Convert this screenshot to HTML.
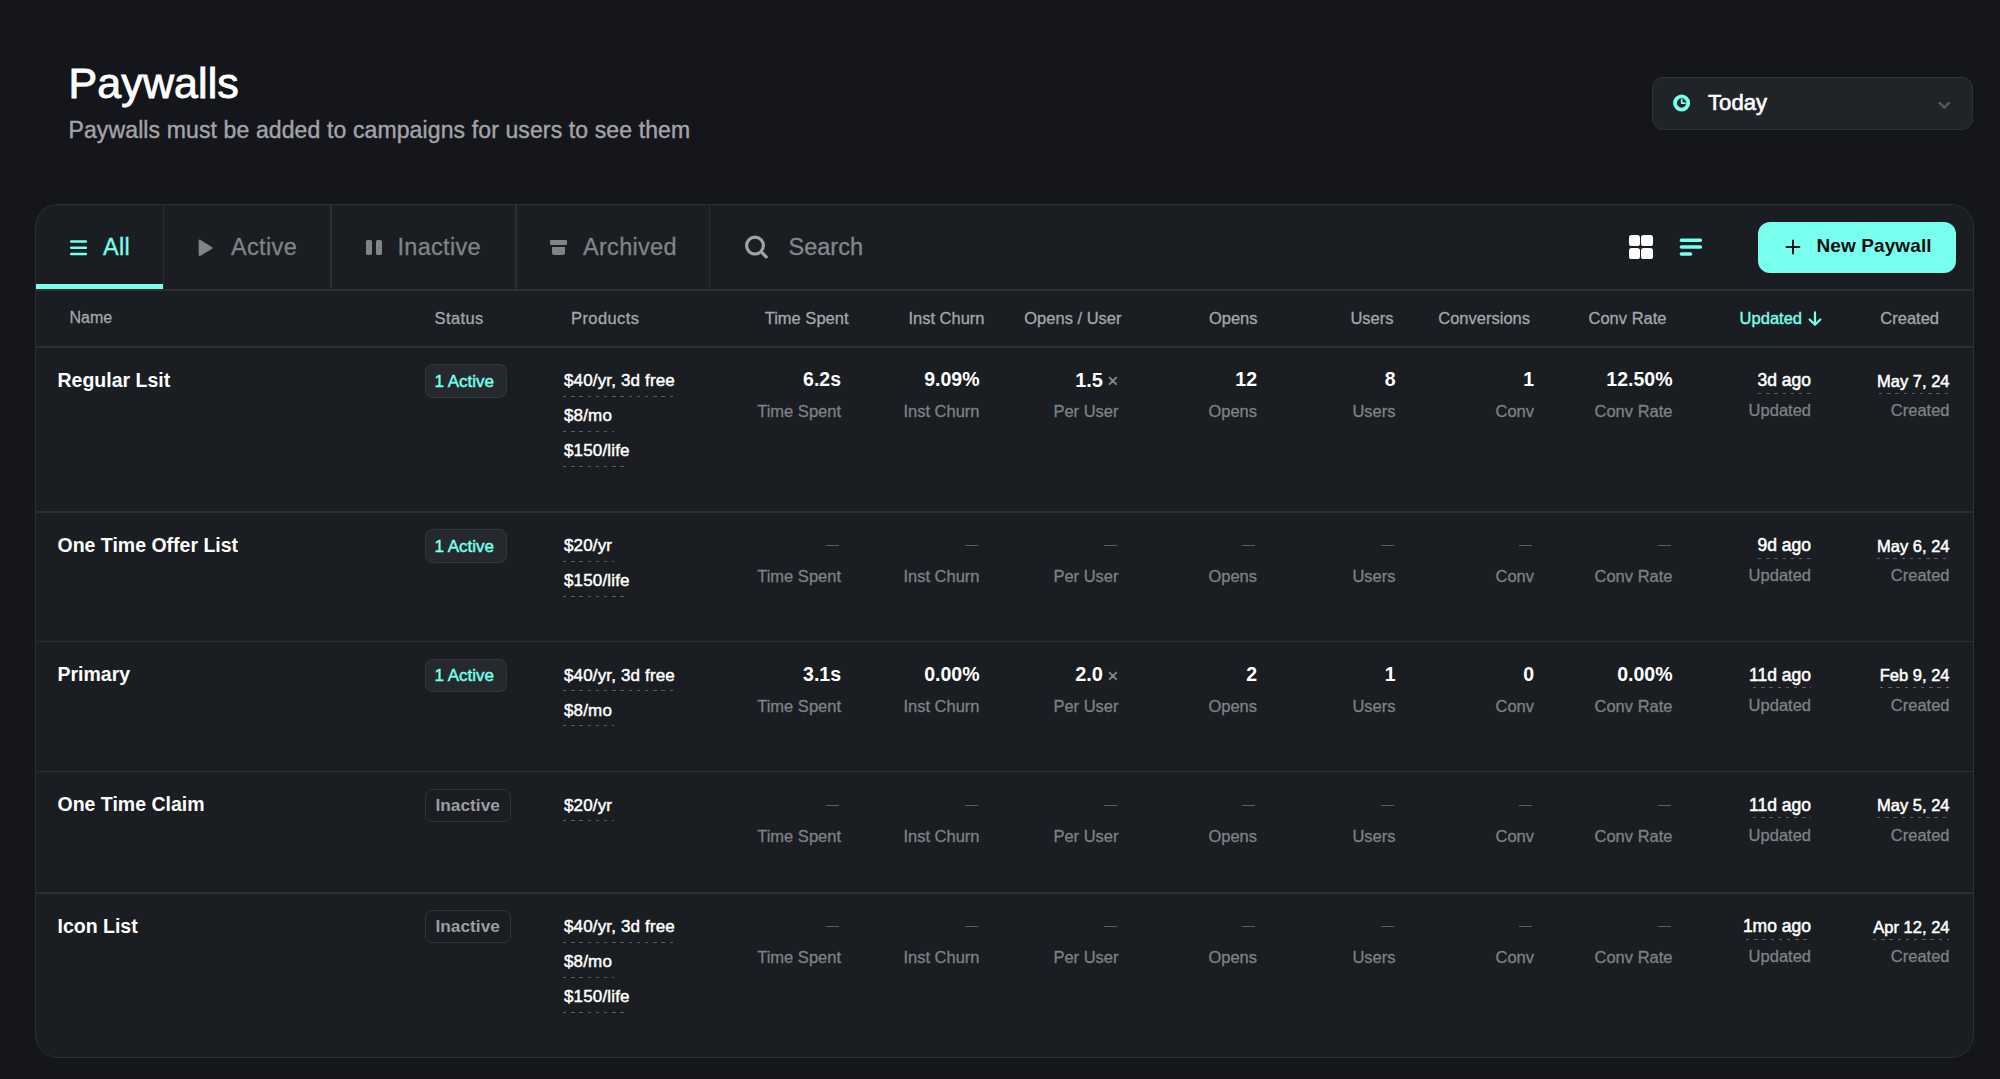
<!DOCTYPE html>
<html><head><meta charset="utf-8"><title>Paywalls</title>
<style>
html,body{margin:0;padding:0}
body{width:2000px;height:1079px;background:#15161b;position:relative;overflow:hidden;font-family:"Liberation Sans", sans-serif}
.t{position:absolute;white-space:nowrap;line-height:1}
</style></head><body>
<div class="t" style="left:68.50px;top:61.75px;font-size:43px;color:#ffffff;font-weight:400;letter-spacing:0.1px;-webkit-text-stroke:0.9px #ffffff;">Paywalls</div>
<div class="t" style="left:68.50px;top:118.75px;font-size:23px;color:#a3a4a8;font-weight:400;letter-spacing:0.12px;-webkit-text-stroke:0.4px #a3a4a8;">Paywalls must be added to campaigns for users to see them</div>
<div style="position:absolute;left:1652px;top:77px;width:321px;height:52.5px;box-sizing:border-box;border:1.5px solid #2e3135;background:#202328;border-radius:11px"></div>
<svg style="position:absolute;left:1671px;top:92px" width="22" height="22" viewBox="0 0 22 22"><circle cx="10.6" cy="11" r="6.6" fill="none" stroke="#78ffee" stroke-width="3.9"/><path d="M10.7 7.7V11.2H14" fill="none" stroke="#78ffee" stroke-width="1.8" stroke-linecap="round" stroke-linejoin="round"/></svg>
<div class="t" style="left:1708.00px;top:91.90px;font-size:22px;color:#ffffff;font-weight:400;letter-spacing:0.1px;-webkit-text-stroke:0.65px #ffffff;">Today</div>
<svg style="position:absolute;left:1934px;top:97px" width="20" height="14" viewBox="0 0 20 14"><path d="M5 5.4L10.3 10.5L15.6 5.4" fill="none" stroke="#54575b" stroke-width="2.5" stroke-linecap="butt" stroke-linejoin="miter"/></svg>
<div style="position:absolute;left:35px;top:204px;width:1938.5px;height:854px;box-sizing:border-box;border:1.5px solid #2b2e32;background:#1a1d21;border-radius:23px"></div>
<div style="position:absolute;left:36px;top:289px;width:1936.5px;height:1.5px;background:#2b2e32"></div>
<div style="position:absolute;left:162.5px;top:205px;width:1.5px;height:84px;background:#2b2e32"></div>
<div style="position:absolute;left:330px;top:205px;width:1.5px;height:84px;background:#2b2e32"></div>
<div style="position:absolute;left:515px;top:205px;width:1.5px;height:84px;background:#2b2e32"></div>
<div style="position:absolute;left:708.5px;top:205px;width:1.5px;height:84px;background:#2b2e32"></div>
<div style="position:absolute;left:36px;top:284px;width:127px;height:4.5px;background:#78ffee"></div>
<svg style="position:absolute;left:68px;top:238px" width="22" height="20" viewBox="0 0 22 20"><path d="M3.2 3.5H17.9M3.2 9.7H17.9M3.2 16H17.9" stroke="#78ffee" stroke-width="2.5" stroke-linecap="round"/></svg>
<div class="t" style="left:103.00px;top:235.83px;font-size:23.5px;color:#78ffee;font-weight:400;letter-spacing:0.3px;-webkit-text-stroke:0.3px #78ffee;">All</div>
<svg style="position:absolute;left:197px;top:237px" width="18" height="22" viewBox="0 0 18 22"><path d="M3.2 3.4Q2.2 2.8 2.2 4V17.6Q2.2 18.8 3.2 18.2L14.6 11.6Q15.6 11 14.6 10.4Z" fill="#818386" stroke="#818386" stroke-width="1.2" stroke-linejoin="round"/></svg>
<div class="t" style="left:231.00px;top:235.83px;font-size:23.5px;color:#818386;font-weight:400;letter-spacing:0.35px;-webkit-text-stroke:0.3px #818386;">Active</div>
<div style="position:absolute;left:365.5px;top:240px;width:6px;height:15.2px;background:#818386;border-radius:1.6px"></div>
<div style="position:absolute;left:375.5px;top:240px;width:6px;height:15.2px;background:#818386;border-radius:1.6px"></div>
<div class="t" style="left:397.50px;top:235.83px;font-size:23.5px;color:#818386;font-weight:400;letter-spacing:0.3px;-webkit-text-stroke:0.3px #818386;">Inactive</div>
<div style="position:absolute;left:549.5px;top:240px;width:17.5px;height:5px;background:#818386;border-radius:1px"></div>
<div style="position:absolute;left:551.5px;top:246.5px;width:13.5px;height:8.8px;background:#818386;border-radius:0 0 2.5px 2.5px"></div>
<div class="t" style="left:583.00px;top:235.83px;font-size:23.5px;color:#818386;font-weight:400;letter-spacing:0.3px;-webkit-text-stroke:0.3px #818386;">Archived</div>
<svg style="position:absolute;left:740px;top:231px" width="32" height="32" viewBox="0 0 32 32"><circle cx="15" cy="14.6" r="8.4" fill="none" stroke="#a0a2a6" stroke-width="3.2"/><path d="M21.5 21.2L26.2 25.9" stroke="#a0a2a6" stroke-width="3.2" stroke-linecap="round"/></svg>
<div class="t" style="left:788.50px;top:235.83px;font-size:23.5px;color:#85878b;font-weight:400;-webkit-text-stroke:0.3px #85878b;">Search</div>
<div style="position:absolute;left:1628.8px;top:235px;width:11.2px;height:11.2px;background:#ffffff;border-radius:2.6px"></div>
<div style="position:absolute;left:1641.4px;top:235px;width:11.2px;height:11.2px;background:#ffffff;border-radius:2.6px"></div>
<div style="position:absolute;left:1628.8px;top:247.6px;width:11.2px;height:11.2px;background:#ffffff;border-radius:2.6px"></div>
<div style="position:absolute;left:1641.4px;top:247.6px;width:11.2px;height:11.2px;background:#ffffff;border-radius:2.6px"></div>
<svg style="position:absolute;left:1676px;top:234px" width="30" height="26" viewBox="0 0 30 26"><path d="M5.4 6.2H24.4M5.4 13H24.4M5.4 20H14.5" stroke="#78ffee" stroke-width="3.6" stroke-linecap="round"/></svg>
<div style="position:absolute;left:1757.5px;top:221.5px;width:198.5px;height:51px;background:#78ffee;border-radius:12px"></div>
<svg style="position:absolute;left:1783px;top:237px" width="20" height="20" viewBox="0 0 20 20"><path d="M10 2.8V17.2M2.8 10H17.2" stroke="#111315" stroke-width="1.9" stroke-linecap="butt"/></svg>
<div class="t" style="left:1816.50px;top:236.15px;font-size:19px;color:#0f1114;font-weight:700;letter-spacing:0.1px;">New Paywall</div>
<div style="position:absolute;left:36px;top:346px;width:1936.5px;height:1.5px;background:#2b2e32"></div>
<div class="t" style="left:69.50px;top:310.20px;font-size:16px;color:#a5a7ab;font-weight:400;-webkit-text-stroke:0.3px #a5a7ab;">Name</div>
<div class="t" style="left:434.50px;top:309.78px;font-size:16.5px;color:#a5a7ab;font-weight:400;letter-spacing:0.4px;-webkit-text-stroke:0.3px #a5a7ab;">Status</div>
<div class="t" style="left:571.00px;top:309.78px;font-size:16.5px;color:#a5a7ab;font-weight:400;letter-spacing:0.4px;-webkit-text-stroke:0.3px #a5a7ab;">Products</div>
<div class="t" style="right:1151.50px;top:309.78px;font-size:16.5px;color:#a5a7ab;font-weight:400;-webkit-text-stroke:0.3px #a5a7ab;">Time Spent</div>
<div class="t" style="right:1015.50px;top:309.78px;font-size:16.5px;color:#a5a7ab;font-weight:400;-webkit-text-stroke:0.3px #a5a7ab;">Inst Churn</div>
<div class="t" style="right:878.50px;top:309.78px;font-size:16.5px;color:#a5a7ab;font-weight:400;-webkit-text-stroke:0.3px #a5a7ab;">Opens / User</div>
<div class="t" style="right:742.50px;top:309.78px;font-size:16.5px;color:#a5a7ab;font-weight:400;-webkit-text-stroke:0.3px #a5a7ab;">Opens</div>
<div class="t" style="right:606.50px;top:309.78px;font-size:16.5px;color:#a5a7ab;font-weight:400;-webkit-text-stroke:0.3px #a5a7ab;">Users</div>
<div class="t" style="right:470.00px;top:309.78px;font-size:16.5px;color:#a5a7ab;font-weight:400;-webkit-text-stroke:0.3px #a5a7ab;">Conversions</div>
<div class="t" style="right:333.50px;top:309.78px;font-size:16.5px;color:#a5a7ab;font-weight:400;-webkit-text-stroke:0.3px #a5a7ab;">Conv Rate</div>
<div class="t" style="right:61.00px;top:309.78px;font-size:16.5px;color:#a5a7ab;font-weight:400;-webkit-text-stroke:0.3px #a5a7ab;">Created</div>
<div class="t" style="right:198.00px;top:309.78px;font-size:16.5px;color:#78ffee;font-weight:400;-webkit-text-stroke:0.4px #78ffee;">Updated</div>
<svg style="position:absolute;left:1806px;top:309px" width="18" height="20" viewBox="0 0 18 20"><path d="M9 3.3V15.6M3.6 10.5L9 15.8L14.4 10.5" fill="none" stroke="#78ffee" stroke-width="2.2" stroke-linecap="round" stroke-linejoin="round"/></svg>
<div class="t" style="left:57.50px;top:370.53px;font-size:19.5px;color:#ffffff;font-weight:700;">Regular Lsit</div>
<div style="position:absolute;left:424.5px;top:364.0px;width:82.5px;height:33.5px;box-sizing:border-box;border:1.5px solid #34373b;background:#25282c;border-radius:7.5px"></div>
<div class="t" style="left:434.50px;top:372.55px;font-size:17px;color:#78ffee;font-weight:400;-webkit-text-stroke:0.45px #78ffee;">1 Active</div>
<div class="t" style="left:564.00px;top:372.35px;font-size:17px;color:#ffffff;font-weight:400;letter-spacing:0.15px;-webkit-text-stroke:0.45px #ffffff;">$40/yr, 3d free</div>
<div style="position:absolute;left:563.00px;top:395.80px;width:110.50px;height:1.2px;background:repeating-linear-gradient(90deg,#5a5e63 0 3.4px,transparent 3.4px 8.2px)"></div>
<div class="t" style="left:564.00px;top:407.35px;font-size:17px;color:#ffffff;font-weight:400;letter-spacing:0.15px;-webkit-text-stroke:0.45px #ffffff;">$8/mo</div>
<div style="position:absolute;left:563.00px;top:430.80px;width:50.50px;height:1.2px;background:repeating-linear-gradient(90deg,#5a5e63 0 3.4px,transparent 3.4px 8.2px)"></div>
<div class="t" style="left:564.00px;top:442.35px;font-size:17px;color:#ffffff;font-weight:400;letter-spacing:0.15px;-webkit-text-stroke:0.45px #ffffff;">$150/life</div>
<div style="position:absolute;left:563.00px;top:465.80px;width:65.50px;height:1.2px;background:repeating-linear-gradient(90deg,#5a5e63 0 3.4px,transparent 3.4px 8.2px)"></div>
<div class="t" style="right:1159.00px;top:370.23px;font-size:19.5px;color:#ffffff;font-weight:700;">6.2s</div>
<div class="t" style="right:1159.00px;top:403.48px;font-size:16.5px;color:#7e8185;font-weight:400;-webkit-text-stroke:0.3px #7e8185;">Time Spent</div>
<div class="t" style="right:1020.50px;top:370.23px;font-size:19.5px;color:#ffffff;font-weight:700;">9.09%</div>
<div class="t" style="right:1020.50px;top:403.48px;font-size:16.5px;color:#7e8185;font-weight:400;-webkit-text-stroke:0.3px #7e8185;">Inst Churn</div>
<div class="t" style="right:897.00px;top:369.80px;font-size:20px;color:#ffffff;font-weight:700;">1.5</div>
<svg style="position:absolute;left:1107.0px;top:375.0px" width="12" height="12" viewBox="0 0 12 12"><path d="M2.6 2.6L9.2 9.2M9.2 2.6L2.6 9.2" stroke="#838588" stroke-width="1.9" stroke-linecap="round"/></svg>
<div class="t" style="right:881.50px;top:403.48px;font-size:16.5px;color:#7e8185;font-weight:400;-webkit-text-stroke:0.3px #7e8185;">Per User</div>
<div class="t" style="right:743.00px;top:370.23px;font-size:19.5px;color:#ffffff;font-weight:700;">12</div>
<div class="t" style="right:743.00px;top:403.48px;font-size:16.5px;color:#7e8185;font-weight:400;-webkit-text-stroke:0.3px #7e8185;">Opens</div>
<div class="t" style="right:604.50px;top:370.23px;font-size:19.5px;color:#ffffff;font-weight:700;">8</div>
<div class="t" style="right:604.50px;top:403.48px;font-size:16.5px;color:#7e8185;font-weight:400;-webkit-text-stroke:0.3px #7e8185;">Users</div>
<div class="t" style="right:466.00px;top:370.23px;font-size:19.5px;color:#ffffff;font-weight:700;">1</div>
<div class="t" style="right:466.00px;top:403.48px;font-size:16.5px;color:#7e8185;font-weight:400;-webkit-text-stroke:0.3px #7e8185;">Conv</div>
<div class="t" style="right:327.50px;top:370.23px;font-size:19.5px;color:#ffffff;font-weight:700;">12.50%</div>
<div class="t" style="right:327.50px;top:403.48px;font-size:16.5px;color:#7e8185;font-weight:400;-webkit-text-stroke:0.3px #7e8185;">Conv Rate</div>
<div class="t" style="right:189.00px;top:372.12px;font-size:17.5px;color:#ffffff;font-weight:400;-webkit-text-stroke:0.5px #ffffff;">3d ago</div>
<div style="position:absolute;left:1757.50px;top:392.50px;width:53.50px;height:1.2px;background:repeating-linear-gradient(90deg,#5a5e63 0 3.4px,transparent 3.4px 8.2px)"></div>
<div class="t" style="right:189.00px;top:402.18px;font-size:16.5px;color:#7e8185;font-weight:400;-webkit-text-stroke:0.3px #7e8185;">Updated</div>
<div class="t" style="right:50.50px;top:372.98px;font-size:16.5px;color:#ffffff;font-weight:400;-webkit-text-stroke:0.5px #ffffff;">May 7, 24</div>
<div style="position:absolute;left:1878.80px;top:392.50px;width:70.70px;height:1.2px;background:repeating-linear-gradient(90deg,#5a5e63 0 3.4px,transparent 3.4px 8.2px)"></div>
<div class="t" style="right:50.50px;top:402.18px;font-size:16.5px;color:#7e8185;font-weight:400;-webkit-text-stroke:0.3px #7e8185;">Created</div>
<div style="position:absolute;left:36px;top:511.0px;width:1936.5px;height:1.5px;background:#2b2e32"></div>
<div class="t" style="left:57.50px;top:535.52px;font-size:19.5px;color:#ffffff;font-weight:700;">One Time Offer List</div>
<div style="position:absolute;left:424.5px;top:529.0px;width:82.5px;height:33.5px;box-sizing:border-box;border:1.5px solid #34373b;background:#25282c;border-radius:7.5px"></div>
<div class="t" style="left:434.50px;top:537.55px;font-size:17px;color:#78ffee;font-weight:400;-webkit-text-stroke:0.45px #78ffee;">1 Active</div>
<div class="t" style="left:564.00px;top:537.35px;font-size:17px;color:#ffffff;font-weight:400;letter-spacing:0.15px;-webkit-text-stroke:0.45px #ffffff;">$20/yr</div>
<div style="position:absolute;left:563.00px;top:560.80px;width:51.00px;height:1.2px;background:repeating-linear-gradient(90deg,#5a5e63 0 3.4px,transparent 3.4px 8.2px)"></div>
<div class="t" style="left:564.00px;top:572.35px;font-size:17px;color:#ffffff;font-weight:400;letter-spacing:0.15px;-webkit-text-stroke:0.45px #ffffff;">$150/life</div>
<div style="position:absolute;left:563.00px;top:595.80px;width:65.50px;height:1.2px;background:repeating-linear-gradient(90deg,#5a5e63 0 3.4px,transparent 3.4px 8.2px)"></div>
<div style="position:absolute;left:826px;top:545.3px;width:13px;height:1.1px;background:#5a5d62"></div>
<div class="t" style="right:1159.00px;top:568.48px;font-size:16.5px;color:#7e8185;font-weight:400;-webkit-text-stroke:0.3px #7e8185;">Time Spent</div>
<div style="position:absolute;left:964.5px;top:545.3px;width:13px;height:1.1px;background:#5a5d62"></div>
<div class="t" style="right:1020.50px;top:568.48px;font-size:16.5px;color:#7e8185;font-weight:400;-webkit-text-stroke:0.3px #7e8185;">Inst Churn</div>
<div style="position:absolute;left:1103.5px;top:545.3px;width:13px;height:1.1px;background:#5a5d62"></div>
<div class="t" style="right:881.50px;top:568.48px;font-size:16.5px;color:#7e8185;font-weight:400;-webkit-text-stroke:0.3px #7e8185;">Per User</div>
<div style="position:absolute;left:1242px;top:545.3px;width:13px;height:1.1px;background:#5a5d62"></div>
<div class="t" style="right:743.00px;top:568.48px;font-size:16.5px;color:#7e8185;font-weight:400;-webkit-text-stroke:0.3px #7e8185;">Opens</div>
<div style="position:absolute;left:1380.5px;top:545.3px;width:13px;height:1.1px;background:#5a5d62"></div>
<div class="t" style="right:604.50px;top:568.48px;font-size:16.5px;color:#7e8185;font-weight:400;-webkit-text-stroke:0.3px #7e8185;">Users</div>
<div style="position:absolute;left:1519px;top:545.3px;width:13px;height:1.1px;background:#5a5d62"></div>
<div class="t" style="right:466.00px;top:568.48px;font-size:16.5px;color:#7e8185;font-weight:400;-webkit-text-stroke:0.3px #7e8185;">Conv</div>
<div style="position:absolute;left:1657.5px;top:545.3px;width:13px;height:1.1px;background:#5a5d62"></div>
<div class="t" style="right:327.50px;top:568.48px;font-size:16.5px;color:#7e8185;font-weight:400;-webkit-text-stroke:0.3px #7e8185;">Conv Rate</div>
<div class="t" style="right:189.00px;top:537.12px;font-size:17.5px;color:#ffffff;font-weight:400;-webkit-text-stroke:0.5px #ffffff;">9d ago</div>
<div style="position:absolute;left:1757.50px;top:557.50px;width:53.50px;height:1.2px;background:repeating-linear-gradient(90deg,#5a5e63 0 3.4px,transparent 3.4px 8.2px)"></div>
<div class="t" style="right:189.00px;top:567.18px;font-size:16.5px;color:#7e8185;font-weight:400;-webkit-text-stroke:0.3px #7e8185;">Updated</div>
<div class="t" style="right:50.50px;top:537.98px;font-size:16.5px;color:#ffffff;font-weight:400;-webkit-text-stroke:0.5px #ffffff;">May 6, 24</div>
<div style="position:absolute;left:1876.50px;top:557.50px;width:73.00px;height:1.2px;background:repeating-linear-gradient(90deg,#5a5e63 0 3.4px,transparent 3.4px 8.2px)"></div>
<div class="t" style="right:50.50px;top:567.18px;font-size:16.5px;color:#7e8185;font-weight:400;-webkit-text-stroke:0.3px #7e8185;">Created</div>
<div style="position:absolute;left:36px;top:640.5px;width:1936.5px;height:1.5px;background:#2b2e32"></div>
<div class="t" style="left:57.50px;top:665.02px;font-size:19.5px;color:#ffffff;font-weight:700;">Primary</div>
<div style="position:absolute;left:424.5px;top:658.5px;width:82.5px;height:33.5px;box-sizing:border-box;border:1.5px solid #34373b;background:#25282c;border-radius:7.5px"></div>
<div class="t" style="left:434.50px;top:667.05px;font-size:17px;color:#78ffee;font-weight:400;-webkit-text-stroke:0.45px #78ffee;">1 Active</div>
<div class="t" style="left:564.00px;top:666.85px;font-size:17px;color:#ffffff;font-weight:400;letter-spacing:0.15px;-webkit-text-stroke:0.45px #ffffff;">$40/yr, 3d free</div>
<div style="position:absolute;left:563.00px;top:690.30px;width:110.50px;height:1.2px;background:repeating-linear-gradient(90deg,#5a5e63 0 3.4px,transparent 3.4px 8.2px)"></div>
<div class="t" style="left:564.00px;top:701.85px;font-size:17px;color:#ffffff;font-weight:400;letter-spacing:0.15px;-webkit-text-stroke:0.45px #ffffff;">$8/mo</div>
<div style="position:absolute;left:563.00px;top:725.30px;width:50.50px;height:1.2px;background:repeating-linear-gradient(90deg,#5a5e63 0 3.4px,transparent 3.4px 8.2px)"></div>
<div class="t" style="right:1159.00px;top:664.72px;font-size:19.5px;color:#ffffff;font-weight:700;">3.1s</div>
<div class="t" style="right:1159.00px;top:697.98px;font-size:16.5px;color:#7e8185;font-weight:400;-webkit-text-stroke:0.3px #7e8185;">Time Spent</div>
<div class="t" style="right:1020.50px;top:664.72px;font-size:19.5px;color:#ffffff;font-weight:700;">0.00%</div>
<div class="t" style="right:1020.50px;top:697.98px;font-size:16.5px;color:#7e8185;font-weight:400;-webkit-text-stroke:0.3px #7e8185;">Inst Churn</div>
<div class="t" style="right:897.00px;top:664.30px;font-size:20px;color:#ffffff;font-weight:700;">2.0</div>
<svg style="position:absolute;left:1107.0px;top:669.5px" width="12" height="12" viewBox="0 0 12 12"><path d="M2.6 2.6L9.2 9.2M9.2 2.6L2.6 9.2" stroke="#838588" stroke-width="1.9" stroke-linecap="round"/></svg>
<div class="t" style="right:881.50px;top:697.98px;font-size:16.5px;color:#7e8185;font-weight:400;-webkit-text-stroke:0.3px #7e8185;">Per User</div>
<div class="t" style="right:743.00px;top:664.72px;font-size:19.5px;color:#ffffff;font-weight:700;">2</div>
<div class="t" style="right:743.00px;top:697.98px;font-size:16.5px;color:#7e8185;font-weight:400;-webkit-text-stroke:0.3px #7e8185;">Opens</div>
<div class="t" style="right:604.50px;top:664.72px;font-size:19.5px;color:#ffffff;font-weight:700;">1</div>
<div class="t" style="right:604.50px;top:697.98px;font-size:16.5px;color:#7e8185;font-weight:400;-webkit-text-stroke:0.3px #7e8185;">Users</div>
<div class="t" style="right:466.00px;top:664.72px;font-size:19.5px;color:#ffffff;font-weight:700;">0</div>
<div class="t" style="right:466.00px;top:697.98px;font-size:16.5px;color:#7e8185;font-weight:400;-webkit-text-stroke:0.3px #7e8185;">Conv</div>
<div class="t" style="right:327.50px;top:664.72px;font-size:19.5px;color:#ffffff;font-weight:700;">0.00%</div>
<div class="t" style="right:327.50px;top:697.98px;font-size:16.5px;color:#7e8185;font-weight:400;-webkit-text-stroke:0.3px #7e8185;">Conv Rate</div>
<div class="t" style="right:189.00px;top:666.62px;font-size:17.5px;color:#ffffff;font-weight:400;-webkit-text-stroke:0.5px #ffffff;">11d ago</div>
<div style="position:absolute;left:1753.00px;top:687.00px;width:58.00px;height:1.2px;background:repeating-linear-gradient(90deg,#5a5e63 0 3.4px,transparent 3.4px 8.2px)"></div>
<div class="t" style="right:189.00px;top:696.68px;font-size:16.5px;color:#7e8185;font-weight:400;-webkit-text-stroke:0.3px #7e8185;">Updated</div>
<div class="t" style="right:50.50px;top:667.48px;font-size:16.5px;color:#ffffff;font-weight:400;-webkit-text-stroke:0.5px #ffffff;">Feb 9, 24</div>
<div style="position:absolute;left:1879.50px;top:687.00px;width:70.00px;height:1.2px;background:repeating-linear-gradient(90deg,#5a5e63 0 3.4px,transparent 3.4px 8.2px)"></div>
<div class="t" style="right:50.50px;top:696.68px;font-size:16.5px;color:#7e8185;font-weight:400;-webkit-text-stroke:0.3px #7e8185;">Created</div>
<div style="position:absolute;left:36px;top:770.5px;width:1936.5px;height:1.5px;background:#2b2e32"></div>
<div class="t" style="left:57.50px;top:795.02px;font-size:19.5px;color:#ffffff;font-weight:700;">One Time Claim</div>
<div style="position:absolute;left:424.5px;top:788.8px;width:86.5px;height:33px;box-sizing:border-box;border:1.5px solid #303338;border-radius:7.5px"></div>
<div class="t" style="left:435.50px;top:796.59px;font-size:17.3px;color:#9b9ca0;font-weight:700;">Inactive</div>
<div class="t" style="left:564.00px;top:796.85px;font-size:17px;color:#ffffff;font-weight:400;letter-spacing:0.15px;-webkit-text-stroke:0.45px #ffffff;">$20/yr</div>
<div style="position:absolute;left:563.00px;top:820.30px;width:51.00px;height:1.2px;background:repeating-linear-gradient(90deg,#5a5e63 0 3.4px,transparent 3.4px 8.2px)"></div>
<div style="position:absolute;left:826px;top:804.8px;width:13px;height:1.1px;background:#5a5d62"></div>
<div class="t" style="right:1159.00px;top:827.98px;font-size:16.5px;color:#7e8185;font-weight:400;-webkit-text-stroke:0.3px #7e8185;">Time Spent</div>
<div style="position:absolute;left:964.5px;top:804.8px;width:13px;height:1.1px;background:#5a5d62"></div>
<div class="t" style="right:1020.50px;top:827.98px;font-size:16.5px;color:#7e8185;font-weight:400;-webkit-text-stroke:0.3px #7e8185;">Inst Churn</div>
<div style="position:absolute;left:1103.5px;top:804.8px;width:13px;height:1.1px;background:#5a5d62"></div>
<div class="t" style="right:881.50px;top:827.98px;font-size:16.5px;color:#7e8185;font-weight:400;-webkit-text-stroke:0.3px #7e8185;">Per User</div>
<div style="position:absolute;left:1242px;top:804.8px;width:13px;height:1.1px;background:#5a5d62"></div>
<div class="t" style="right:743.00px;top:827.98px;font-size:16.5px;color:#7e8185;font-weight:400;-webkit-text-stroke:0.3px #7e8185;">Opens</div>
<div style="position:absolute;left:1380.5px;top:804.8px;width:13px;height:1.1px;background:#5a5d62"></div>
<div class="t" style="right:604.50px;top:827.98px;font-size:16.5px;color:#7e8185;font-weight:400;-webkit-text-stroke:0.3px #7e8185;">Users</div>
<div style="position:absolute;left:1519px;top:804.8px;width:13px;height:1.1px;background:#5a5d62"></div>
<div class="t" style="right:466.00px;top:827.98px;font-size:16.5px;color:#7e8185;font-weight:400;-webkit-text-stroke:0.3px #7e8185;">Conv</div>
<div style="position:absolute;left:1657.5px;top:804.8px;width:13px;height:1.1px;background:#5a5d62"></div>
<div class="t" style="right:327.50px;top:827.98px;font-size:16.5px;color:#7e8185;font-weight:400;-webkit-text-stroke:0.3px #7e8185;">Conv Rate</div>
<div class="t" style="right:189.00px;top:796.62px;font-size:17.5px;color:#ffffff;font-weight:400;-webkit-text-stroke:0.5px #ffffff;">11d ago</div>
<div style="position:absolute;left:1753.00px;top:817.00px;width:58.00px;height:1.2px;background:repeating-linear-gradient(90deg,#5a5e63 0 3.4px,transparent 3.4px 8.2px)"></div>
<div class="t" style="right:189.00px;top:826.68px;font-size:16.5px;color:#7e8185;font-weight:400;-webkit-text-stroke:0.3px #7e8185;">Updated</div>
<div class="t" style="right:50.50px;top:797.48px;font-size:16.5px;color:#ffffff;font-weight:400;-webkit-text-stroke:0.5px #ffffff;">May 5, 24</div>
<div style="position:absolute;left:1876.50px;top:817.00px;width:73.00px;height:1.2px;background:repeating-linear-gradient(90deg,#5a5e63 0 3.4px,transparent 3.4px 8.2px)"></div>
<div class="t" style="right:50.50px;top:826.68px;font-size:16.5px;color:#7e8185;font-weight:400;-webkit-text-stroke:0.3px #7e8185;">Created</div>
<div style="position:absolute;left:36px;top:892.0px;width:1936.5px;height:1.5px;background:#2b2e32"></div>
<div class="t" style="left:57.50px;top:916.52px;font-size:19.5px;color:#ffffff;font-weight:700;">Icon List</div>
<div style="position:absolute;left:424.5px;top:910.3px;width:86.5px;height:33px;box-sizing:border-box;border:1.5px solid #303338;border-radius:7.5px"></div>
<div class="t" style="left:435.50px;top:918.09px;font-size:17.3px;color:#9b9ca0;font-weight:700;">Inactive</div>
<div class="t" style="left:564.00px;top:918.35px;font-size:17px;color:#ffffff;font-weight:400;letter-spacing:0.15px;-webkit-text-stroke:0.45px #ffffff;">$40/yr, 3d free</div>
<div style="position:absolute;left:563.00px;top:941.80px;width:110.50px;height:1.2px;background:repeating-linear-gradient(90deg,#5a5e63 0 3.4px,transparent 3.4px 8.2px)"></div>
<div class="t" style="left:564.00px;top:953.35px;font-size:17px;color:#ffffff;font-weight:400;letter-spacing:0.15px;-webkit-text-stroke:0.45px #ffffff;">$8/mo</div>
<div style="position:absolute;left:563.00px;top:976.80px;width:50.50px;height:1.2px;background:repeating-linear-gradient(90deg,#5a5e63 0 3.4px,transparent 3.4px 8.2px)"></div>
<div class="t" style="left:564.00px;top:988.35px;font-size:17px;color:#ffffff;font-weight:400;letter-spacing:0.15px;-webkit-text-stroke:0.45px #ffffff;">$150/life</div>
<div style="position:absolute;left:563.00px;top:1011.80px;width:65.50px;height:1.2px;background:repeating-linear-gradient(90deg,#5a5e63 0 3.4px,transparent 3.4px 8.2px)"></div>
<div style="position:absolute;left:826px;top:926.3px;width:13px;height:1.1px;background:#5a5d62"></div>
<div class="t" style="right:1159.00px;top:949.48px;font-size:16.5px;color:#7e8185;font-weight:400;-webkit-text-stroke:0.3px #7e8185;">Time Spent</div>
<div style="position:absolute;left:964.5px;top:926.3px;width:13px;height:1.1px;background:#5a5d62"></div>
<div class="t" style="right:1020.50px;top:949.48px;font-size:16.5px;color:#7e8185;font-weight:400;-webkit-text-stroke:0.3px #7e8185;">Inst Churn</div>
<div style="position:absolute;left:1103.5px;top:926.3px;width:13px;height:1.1px;background:#5a5d62"></div>
<div class="t" style="right:881.50px;top:949.48px;font-size:16.5px;color:#7e8185;font-weight:400;-webkit-text-stroke:0.3px #7e8185;">Per User</div>
<div style="position:absolute;left:1242px;top:926.3px;width:13px;height:1.1px;background:#5a5d62"></div>
<div class="t" style="right:743.00px;top:949.48px;font-size:16.5px;color:#7e8185;font-weight:400;-webkit-text-stroke:0.3px #7e8185;">Opens</div>
<div style="position:absolute;left:1380.5px;top:926.3px;width:13px;height:1.1px;background:#5a5d62"></div>
<div class="t" style="right:604.50px;top:949.48px;font-size:16.5px;color:#7e8185;font-weight:400;-webkit-text-stroke:0.3px #7e8185;">Users</div>
<div style="position:absolute;left:1519px;top:926.3px;width:13px;height:1.1px;background:#5a5d62"></div>
<div class="t" style="right:466.00px;top:949.48px;font-size:16.5px;color:#7e8185;font-weight:400;-webkit-text-stroke:0.3px #7e8185;">Conv</div>
<div style="position:absolute;left:1657.5px;top:926.3px;width:13px;height:1.1px;background:#5a5d62"></div>
<div class="t" style="right:327.50px;top:949.48px;font-size:16.5px;color:#7e8185;font-weight:400;-webkit-text-stroke:0.3px #7e8185;">Conv Rate</div>
<div class="t" style="right:189.00px;top:918.12px;font-size:17.5px;color:#ffffff;font-weight:400;-webkit-text-stroke:0.5px #ffffff;">1mo ago</div>
<div style="position:absolute;left:1746.00px;top:938.50px;width:65.00px;height:1.2px;background:repeating-linear-gradient(90deg,#5a5e63 0 3.4px,transparent 3.4px 8.2px)"></div>
<div class="t" style="right:189.00px;top:948.18px;font-size:16.5px;color:#7e8185;font-weight:400;-webkit-text-stroke:0.3px #7e8185;">Updated</div>
<div class="t" style="right:50.50px;top:918.98px;font-size:16.5px;color:#ffffff;font-weight:400;-webkit-text-stroke:0.5px #ffffff;">Apr 12, 24</div>
<div style="position:absolute;left:1873.20px;top:938.50px;width:76.30px;height:1.2px;background:repeating-linear-gradient(90deg,#5a5e63 0 3.4px,transparent 3.4px 8.2px)"></div>
<div class="t" style="right:50.50px;top:948.18px;font-size:16.5px;color:#7e8185;font-weight:400;-webkit-text-stroke:0.3px #7e8185;">Created</div>
</body></html>
